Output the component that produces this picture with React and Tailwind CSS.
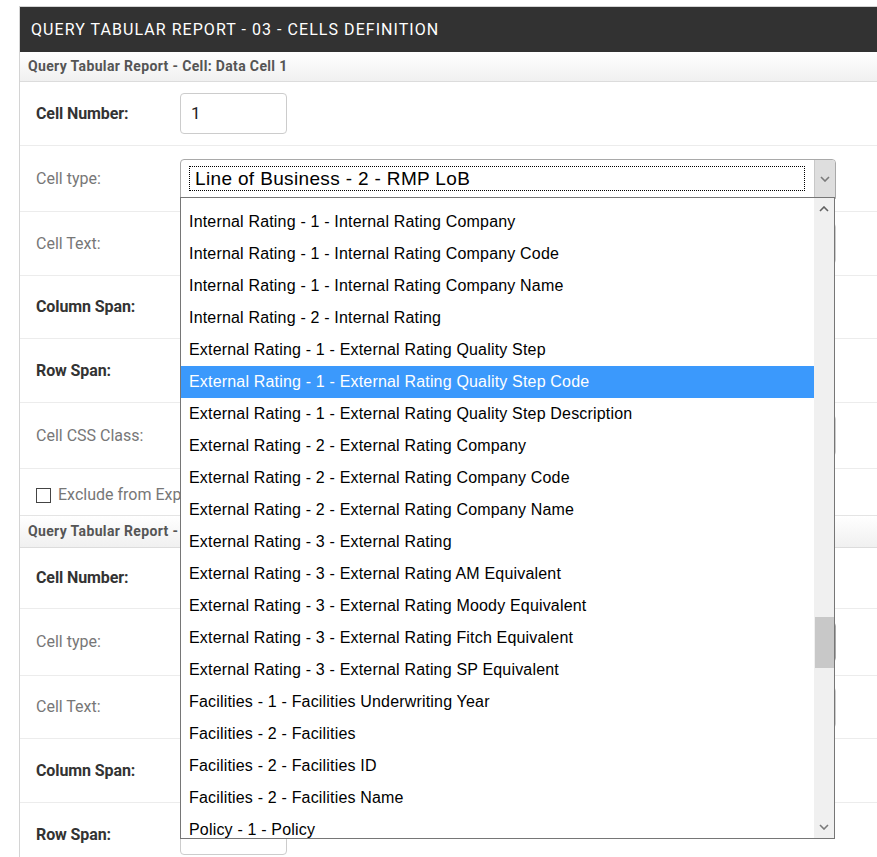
import React from 'react';

// ============================================
// DATA
// ============================================

const options = [
    'Internal Rating - 1 - Internal Rating Company',
    'Internal Rating - 1 - Internal Rating Company Code',
    'Internal Rating - 1 - Internal Rating Company Name',
    'Internal Rating - 2 - Internal Rating',
    'External Rating - 1 - External Rating Quality Step',
    'External Rating - 1 - External Rating Quality Step Code',
    'External Rating - 1 - External Rating Quality Step Description',
    'External Rating - 2 - External Rating Company',
    'External Rating - 2 - External Rating Company Code',
    'External Rating - 2 - External Rating Company Name',
    'External Rating - 3 - External Rating',
    'External Rating - 3 - External Rating AM Equivalent',
    'External Rating - 3 - External Rating Moody Equivalent',
    'External Rating - 3 - External Rating Fitch Equivalent',
    'External Rating - 3 - External Rating SP Equivalent',
    'Facilities - 1 - Facilities Underwriting Year',
    'Facilities - 2 - Facilities',
    'Facilities - 2 - Facilities ID',
    'Facilities - 2 - Facilities Name',
    'Policy - 1 - Policy',
];

const selected = 5;

const sysFont = { fontFamily: '"Liberation Sans", Arial, sans-serif' };

// ============================================
// PIECES
// ============================================

const SubHeader = ({ h = 'h-[30px]', clip, children }) => (
    <div className={`${h} flex items-center px-[8px] bg-gradient-to-b from-white to-[#f0f0f0] border-b border-[#dcdcdc] text-[14px] tracking-[0.35px] font-bold text-[#555] font-['Roboto',sans-serif] whitespace-nowrap`}>
        <span className={clip ? 'block w-[152px] overflow-hidden' : ''}>{children}</span>
    </div>
);

const Row = ({ label, bold, h, children }) => (
    <div className={`flex items-center border-b border-[#ececec] ${h}`}>
        <div
            className={`w-[160px] pl-[16px] shrink-0 text-[16px] font-['Roboto',sans-serif] ${
                bold ? 'font-bold text-[#333] tracking-[-0.1px]' : 'text-[#777]'
            }`}
        >
            {label}
        </div>
        <div className="flex-1">{children}</div>
    </div>
);

const SmallInput = ({ value }) => (
    <div className="w-[107px] h-[41px] border border-[#ccc] rounded-[4px] flex items-center px-[10px] text-[17px] text-[#222] font-['Roboto',sans-serif]">
        {value}
    </div>
);

const WideInput = () => (
    <div className="w-[656px] h-[41px] border border-[#ccc] rounded-[4px]" />
);

const Chevron = ({ up }) => (
    <svg width="10" height="6" viewBox="0 0 10 6">
        <path
            d={up ? 'M1 5 L5 1 L9 5' : 'M1 1 L5 5 L9 1'}
            fill="none"
            stroke={up ? '#606060' : '#7a7a7a'}
            strokeWidth="1.6"
        />
    </svg>
);

const OpenSelect = () => (
    <div className="w-[656px] h-[40px] border border-[#a9a9a9] rounded-t-[4px] flex bg-white">
        <div className="flex-1 flex items-center pl-[8px] pr-[9px]">
            <div
                className="w-full h-[25px] border border-dotted border-black flex items-center px-[5px] pt-[2px] text-[19px] tracking-[0.35px] text-black whitespace-nowrap"
                style={sysFont}
            >
                Line of Business - 2 - RMP LoB
            </div>
        </div>
        <div className="w-[21px] bg-[#dedede] border-l border-[#c8c8c8] flex items-center justify-center rounded-tr-[3px]">
            <Chevron />
        </div>
    </div>
);

const DropList = () => (
    <div className="absolute left-[160px] top-[190px] w-[655px] h-[642px] bg-white border border-[#767676] flex overflow-hidden">
        <div className="flex-1 pt-[8px]" style={sysFont}>
            {options.map((o, i) => (
                <div
                    key={o}
                    className={`h-[32px] flex items-center pl-[8px] text-[16px] tracking-[0.18px] whitespace-nowrap ${
                        i === selected ? 'bg-[#3b99fc] text-white' : 'text-black'
                    }`}
                >
                    {o}
                </div>
            ))}
        </div>
        <div className="w-[20px] bg-[#f0f0f0] flex flex-col items-center">
            <div className="h-[22px] flex items-center justify-center">
                <Chevron up />
            </div>
            <div className="h-[397px]" />
            <div className="w-[19px] h-[51px] bg-[#c8c8c8]" />
            <div className="flex-1" />
            <div className="h-[22px] flex items-center justify-center">
                <Chevron />
            </div>
        </div>
    </div>
);

// ============================================
// APP
// ============================================

export default function App() {
    return (
        <div className="min-h-screen bg-white pl-[19px] pt-[6px] overflow-hidden">
            <div className="relative border-l border-t border-[#d4d4d4] h-[851px]">
                <div className="h-[45px] bg-[#323232] flex items-center px-[11px] text-white text-[16px] tracking-[1.05px] font-['Roboto',sans-serif] whitespace-nowrap">
                    QUERY TABULAR REPORT - 03 - CELLS DEFINITION
                </div>

                <SubHeader>Query Tabular Report - Cell: Data Cell 1</SubHeader>
                <Row label="Cell Number:" bold h="h-[64px]">
                    <SmallInput value="1" />
                </Row>
                <Row label="Cell type:" h="h-[66px]">
                    <OpenSelect />
                </Row>
                <Row label="Cell Text:" h="h-[64px]">
                    <WideInput />
                </Row>
                <Row label="Column Span:" bold h="h-[63px]">
                    <SmallInput />
                </Row>
                <Row label="Row Span:" bold h="h-[64px]">
                    <SmallInput />
                </Row>
                <Row label="Cell CSS Class:" h="h-[66px]">
                    <WideInput />
                </Row>
                <div className="h-[47px] flex items-center pl-[16px] pt-[6px] gap-[7px] border-b border-[#e4e4e4] text-[16px] text-[#777] font-['Roboto',sans-serif] whitespace-nowrap">
                    <div className="w-[15px] h-[15px] border border-[#444] bg-white shrink-0" />
                    Exclude from Export
                </div>

                <SubHeader h="h-[32px]" clip>Query Tabular Report - Cell: Data Cell 2</SubHeader>
                <Row label="Cell Number:" bold h="h-[61px]">
                    <SmallInput />
                </Row>
                <Row label="Cell type:" h="h-[67px]">
                    <div className="w-[656px] h-[40px] border border-[#a9a9a9] rounded-[4px] flex justify-end">
                        <div className="w-[21px] bg-[#dedede] rounded-r-[3px]" />
                    </div>
                </Row>
                <Row label="Cell Text:" h="h-[63px]">
                    <WideInput />
                </Row>
                <Row label="Column Span:" bold h="h-[64px]">
                    <SmallInput />
                </Row>
                <Row label="Row Span:" bold h="h-[64px]">
                    <SmallInput />
                </Row>

                <DropList />
            </div>
        </div>
    );
}
